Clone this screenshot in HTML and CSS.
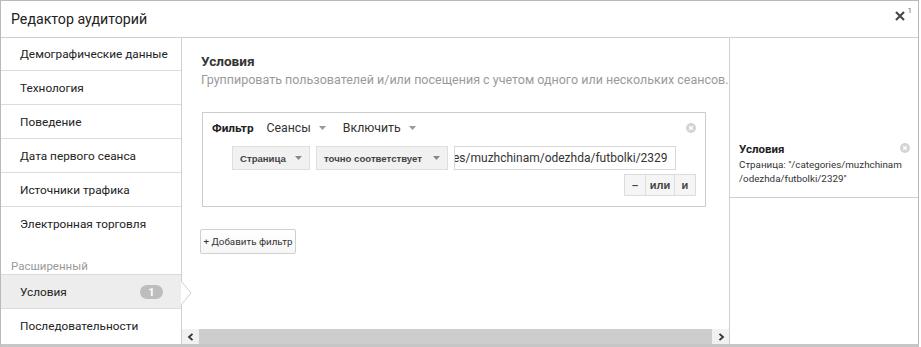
FILE: index.html
```html
<!DOCTYPE html>
<html lang="ru">
<head>
<meta charset="utf-8">
<title>Редактор аудиторий</title>
<link rel="stylesheet" href="styles.css">
</head>
<body>
<div class="modal">
  <div class="header">
    <div class="title">Редактор аудиторий</div>
    <div class="close">
      <svg width="10" height="10" viewBox="0 0 10 10"><path d="M1 1 L9 9 M9 1 L1 9" stroke="#4a4a4a" stroke-width="2.2" fill="none"/></svg>
      <span class="sup">1</span>
    </div>
  </div>
  <div class="body">
    <div class="sidebar">
      <div class="nav-item first">Демографические данные</div>
      <div class="nav-item">Технология</div>
      <div class="nav-item">Поведение</div>
      <div class="nav-item">Дата первого сеанса</div>
      <div class="nav-item">Источники трафика</div>
      <div class="nav-item last">Электронная торговля</div>
      <div class="nav-label">Расширенный</div>
      <div class="nav-item selected">Условия <span class="badge">1</span>
        <svg class="pointer" width="11" height="24" viewBox="0 0 11 24"><path d="M0 0 L10 12 L0 24 Z" fill="#ffffff"/><path d="M0 0 L10 12 L0 24" fill="none" stroke="#cfcfcf" stroke-width="1"/></svg>
      </div>
      <div class="nav-item last">Последовательности</div>
    </div>
    <div class="main">
      <div class="content">
        <div class="heading">Условия</div>
        <div class="subtitle">Группировать пользователей и/или посещения с учетом одного или нескольких сеансов.</div>
        <div class="filter">
          <div class="filter-top">
            <span class="filter-label">Фильтр</span>
            <span class="dd">Сеансы <svg width="7" height="4" viewBox="0 0 7 4"><path d="M0 0 L7 0 L3.5 4 Z" fill="#999"/></svg></span>
            <span class="dd">Включить <svg width="7" height="4" viewBox="0 0 7 4"><path d="M0 0 L7 0 L3.5 4 Z" fill="#999"/></svg></span>
            <span class="remove"><svg width="10" height="10" viewBox="0 0 10 10"><circle cx="5" cy="5" r="5" fill="#d4d4d4"/><path d="M3.2 3.2 L6.8 6.8 M6.8 3.2 L3.2 6.8" stroke="#fff" stroke-width="1.3"/></svg></span>
          </div>
          <div class="filter-row">
            <div class="sel sel-page"><span>Страница</span><svg width="7" height="4" viewBox="0 0 7 4"><path d="M0 0 L7 0 L3.5 4 Z" fill="#888"/></svg></div>
            <div class="sel sel-match"><span>точно соответствует</span><svg width="7" height="4" viewBox="0 0 7 4"><path d="M0 0 L7 0 L3.5 4 Z" fill="#888"/></svg></div>
            <div class="input"><span>es/muzhchinam/odezhda/futbolki/2329</span></div>
          </div>
          <div class="filter-actions">
            <div class="btn-group">
              <span class="gbtn">–</span>
              <span class="gbtn">или</span>
              <span class="gbtn">и</span>
            </div>
          </div>
        </div>
        <div class="add-filter">+ Добавить фильтр</div>
      </div>
      <div class="hscroll">
        <div class="arrow"><svg width="7" height="8" viewBox="0 0 7 8"><path d="M5.5 0.8 L2 4 L5.5 7.2" fill="none" stroke="#333" stroke-width="1.8"/></svg></div>
        <div class="thumb"></div>
        <div class="arrow"><svg width="7" height="8" viewBox="0 0 7 8"><path d="M1.5 0.8 L5 4 L1.5 7.2" fill="none" stroke="#333" stroke-width="1.8"/></svg></div>
      </div>
    </div>
    <div class="summary">
      <div class="summary-item">
        <div class="summary-title">Условия</div>
        <div class="summary-text">Страница: "/categories/muzhchinam<br>/odezhda/futbolki/2329"</div>
        <span class="remove summary-remove"><svg width="10" height="10" viewBox="0 0 10 10"><circle cx="5" cy="5" r="5" fill="#d4d4d4"/><path d="M3.2 3.2 L6.8 6.8 M6.8 3.2 L3.2 6.8" stroke="#fff" stroke-width="1.3"/></svg></span>
      </div>
    </div>
  </div>
</div>
</body>
</html>
```

FILE: styles.css
```css
* { box-sizing: border-box; }
html, body { margin: 0; padding: 0; background: #ffffff; }
body {
  font-family: Roboto, "Noto Sans", "Liberation Sans", sans-serif;
  color: #222;
  width: 921px;
  height: 347px;
  overflow: hidden;
}
.modal {
  width: 919px;
  height: 347px;
  border: 1px solid #b9b9b9;
  border-bottom: 3px solid #c6c6c6;
  display: flex;
  flex-direction: column;
  background: #fff;
}
.header {
  height: 37px;
  border-bottom: 1px solid #cfcfcf;
  display: flex;
  align-items: center;
  justify-content: space-between;
  padding: 0 6px 1px 10px;
  flex: none;
}
.title { font-size: 14.2px; color: #222; }
.close { display: flex; align-items: flex-start; gap: 3px; margin-top: -10px; }
.close svg { margin-top: 4px; }
.sup { font-size: 8px; color: #666; line-height: 8px; }
.body { flex: 1; display: flex; min-height: 0; }
.sidebar {
  width: 181px;
  border-right: 1px solid #cfcfcf;
  flex: none;
  display: flex;
  flex-direction: column;
}
.nav-item {
  height: 34px;
  border-bottom: 1px solid #dcdcdc;
  padding-left: 19px;
  display: flex;
  align-items: center;
  font-size: 11.8px;
  color: #222;
  position: relative;
  flex: none;
  white-space: nowrap;
}
.nav-item.first { height: 33px; }
.nav-item.last { border-bottom: none; }
.nav-label {
  height: 34px;
  border-bottom: 1px solid #dcdcdc;
  padding-left: 10px;
  display: flex;
  align-items: flex-end;
  font-size: 11.5px;
  line-height: 14px;
  padding-bottom: 1px;
  color: #9a9a9a;
  flex: none;
}
.nav-item.selected { background: #ededed; }
.badge {
  position: absolute;
  left: 139px;
  top: 10px;
  width: 23px;
  height: 14px;
  border-radius: 7px;
  background: #bdbdbd;
  color: #fff;
  font-size: 11px;
  font-weight: bold;
  display: flex;
  align-items: center;
  justify-content: center;
}
.pointer { position: absolute; right: -11px; top: 6px; }
.main {
  flex: 1;
  display: flex;
  flex-direction: column;
  min-width: 0;
  border-right: 1px solid #cfcfcf;
}
.content { flex: 1; padding: 14px 0 0 19px; overflow: hidden; }
.heading { font-size: 13.6px; font-weight: bold; line-height: 18px; color: #333; }
.subtitle {
  font-size: 12.5px;
  line-height: 16px;
  color: #9a9a9a;
  margin-top: 2px;
  white-space: nowrap;
}
.filter {
  margin-top: 24px;
  margin-left: 1px;
  width: 504px;
  height: 95px;
  border: 1px solid #cccccc;
  padding: 7px 9px 0 9px;
}
.filter-top {
  display: flex;
  align-items: center;
  height: 16px;
  font-size: 12.3px;
  color: #333;
}
.filter-label { font-weight: bold; color: #222; font-size: 11.8px; margin-right: 13px; }
.dd { display: flex; align-items: center; gap: 6px; margin-right: 17px; }
.dd svg { margin-left: 2px; }
.remove { display: flex; margin-left: auto; margin-right: 0; }
.filter-row {
  display: flex;
  gap: 6px;
  margin-top: 10px;
  margin-left: 20px;
  height: 24px;
}
.sel {
  background: #f1f1f1;
  border: 1px solid #dedede;
  display: flex;
  align-items: center;
  justify-content: space-between;
  padding: 0 7px 0 7px;
  font-family: "Liberation Sans", Arial, sans-serif;
  font-size: 9.6px;
  font-weight: bold;
  color: #444;
  white-space: nowrap;
  gap: 4px;
}
.sel-page { width: 78px; }
.sel-match { width: 132px; }
.input {
  width: 222px;
  border: 1px solid #d8d8d8;
  display: flex;
  align-items: center;
  overflow: hidden;
  white-space: nowrap;
  font-size: 12px;
  color: #333;
}
.input span { flex: none; margin-left: -2px; }
.filter-actions { display: flex; justify-content: flex-end; margin-top: 4px; }
.btn-group {
  display: flex;
  border: 1px solid #dcdcdc;
  height: 22px;
  background: #f5f5f5;
}
.gbtn {
  display: flex;
  align-items: center;
  justify-content: center;
  font-family: "Liberation Sans", Arial, sans-serif;
  font-size: 11px;
  font-weight: bold;
  color: #444;
  border-left: 1px solid #dcdcdc;
}
.gbtn:first-child { border-left: none; width: 20px; }
.gbtn:nth-child(2) { width: 29px; }
.gbtn:nth-child(3) { width: 21px; }
.add-filter {
  margin-top: 22px;
  margin-left: -1px;
  width: 96px;
  height: 25px;
  border: 1px solid #cfcfcf;
  border-radius: 2px;
  background: linear-gradient(#ffffff, #f6f6f6);
  font-size: 9.8px;
  color: #333;
  display: flex;
  align-items: center;
  justify-content: center;
  white-space: nowrap;
}
.hscroll { height: 15px; display: flex; background: #f1f1f1; flex: none; }
.arrow {
  width: 16px;
  display: flex;
  align-items: center;
  justify-content: center;
  background: #f1f1f1;
}
.thumb { flex: 1; background: #cdcdcd; margin: 0 1px; }
.summary { width: 188px; flex: none; padding-top: 103px; }
.summary-item {
  position: relative;
  padding: 0 10px 11px 9px;
  border-bottom: 1px solid #cfcfcf;
}
.summary-title { font-size: 11.5px; font-weight: bold; line-height: 16px; color: #222; }
.summary-text { font-size: 9.8px; line-height: 14px; color: #333; margin-top: 1px; white-space: nowrap; }
.summary-remove { position: absolute; right: 8px; top: 2px; }
```
